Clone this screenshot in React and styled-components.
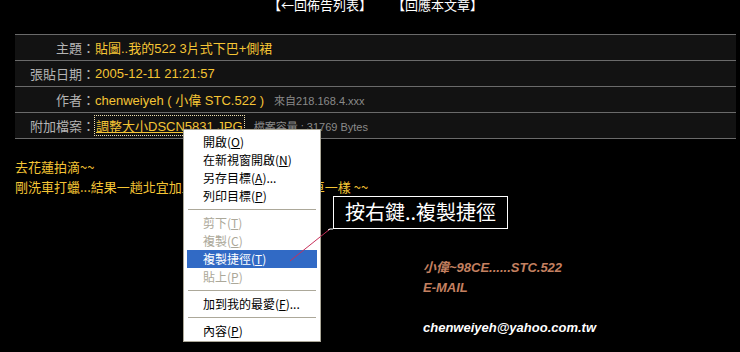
import React from 'react';
import styled, { createGlobalStyle } from 'styled-components';

const GlobalStyle = createGlobalStyle`
  html, body {
    margin: 0;
    padding: 0;
    background: #000;
  }
  body {
    font-family: "Liberation Sans", "Noto Sans CJK TC", sans-serif;
    overflow: hidden;
  }
`;

const rows = [
  { label: '主題', value: '貼圖..我的522 3片式下巴+側裙' },
  { label: '張貼日期', value: '2005-12-11 21:21:57' },
  { label: '作者', value: 'chenweiyeh ( 小偉 STC.522 )', extra: '來自218.168.4.xxx' },
  { label: '附加檔案', file: '調整大小DSCN5831.JPG', extra: '檔案容量 : 31769 Bytes' },
];

const menuItems = [
  { text: '開啟', key: 'O' },
  { text: '在新視窗開啟', key: 'N' },
  { text: '另存目標', key: 'A', more: true },
  { text: '列印目標', key: 'P' },
  { sep: true },
  { text: '剪下', key: 'T', disabled: true },
  { text: '複製', key: 'C', disabled: true },
  { text: '複製捷徑', key: 'T', active: true },
  { text: '貼上', key: 'P', disabled: true },
  { sep: true },
  { text: '加到我的最愛', key: 'F', more: true },
  { sep: true },
  { text: '內容', key: 'P' },
];

const App = () => {
  return (
    <Page>
      <GlobalStyle />
      <Nav>
        <NavLink>【←回佈告列表】</NavLink>
        <NavLink>【回應本文章】</NavLink>
      </Nav>

      <InfoTable>
        {rows.map(row => (
          <Row key={row.label}>
            <Label>{row.label}：</Label>
            <Value>
              {row.value}
              {row.file && <FileLink>{row.file}</FileLink>}
              {row.extra && <Extra>{row.extra}</Extra>}
            </Value>
          </Row>
        ))}
      </InfoTable>

      <Body>
        <p>去花蓮拍滴~~</p>
        <p>剛洗車打蠟...結果一趟北宜加上下大雨整台就跟沒洗車一樣 ~~</p>
      </Body>

      <Signature>
        <SigLine>小偉~98CE......STC.522</SigLine>
        <SigLine>E-MAIL</SigLine>
        <SigLine />
        <SigLine $white>chenweiyeh@yahoo.com.tw</SigLine>
      </Signature>

      <Menu>
        {menuItems.map((item, i) =>
          item.sep ? (
            <Separator key={i} />
          ) : (
            <MenuItem key={i} $disabled={item.disabled} $active={item.active}>
              {item.text}(<u>{item.key}</u>){item.more ? '...' : ''}
            </MenuItem>
          )
        )}
      </Menu>

      <Pointer width="50" height="40" viewBox="0 0 50 40">
        <line x1="44" y1="3" x2="4" y2="35" stroke="#c8305a" strokeWidth="1" />
        <polyline points="42,4 44,3 47,3" fill="none" stroke="#ffffff" strokeWidth="1" />
      </Pointer>
      <Callout>按右鍵..複製捷徑</Callout>
    </Page>
  );
};

const Page = styled.div`
  position: relative;
  width: 740px;
  height: 352px;
  padding: 0 4px 0 15px;
  box-sizing: border-box;
  background: #000;
`;

const Nav = styled.div`
  display: flex;
  justify-content: center;
  gap: 20px;
  margin-top: -3px;
  padding-left: 0;
  height: 16px;
`;

const NavLink = styled.span`
  color: #fff;
  font-size: 13px;
  line-height: 16px;
  font-family: "Noto Sans CJK TC", sans-serif;
`;

const InfoTable = styled.div`
  margin-top: 21px;
  border-top: 1px solid #6a6a6a;
  background: #121212;
`;

const Row = styled.div`
  display: grid;
  grid-template-columns: 80px 1fr;
  height: 25px;
  align-items: center;
  border-bottom: 1px solid #6a6a6a;
`;

const Label = styled.div`
  color: #b4b4b4;
  font-size: 13px;
  text-align: right;
  font-family: "Noto Sans CJK TC", sans-serif;
`;

const Value = styled.div`
  color: #f5c535;
  font-size: 13px;
  white-space: nowrap;
  display: flex;
  align-items: center;
`;

const FileLink = styled.span`
  color: #f5c535;
  text-decoration: underline;
  outline: 1px dotted #f0e0b0;
  padding: 0 1px;
`;

const Extra = styled.span`
  color: #8a8a8a;
  font-size: 11px;
  margin-left: 10px;
`;

const Body = styled.div`
  margin-top: 18px;
  color: #f5c535;
  font-size: 13px;
  line-height: 20px;
  font-family: "Noto Sans CJK TC", sans-serif;

  p {
    margin: 0;
    white-space: nowrap;
  }
`;

const Signature = styled.div`
  margin-top: 61px;
  padding-left: 408px;
`;

const SigLine = styled.div`
  height: 20px;
  line-height: 20px;
  font-size: 13px;
  font-weight: 700;
  font-style: italic;
  color: ${p => (p.$white ? '#ffffff' : '#c48060')};
`;

const Menu = styled.div`
  position: absolute;
  left: 183px;
  top: 132px;
  width: 138px;
  height: 213px;
  box-sizing: border-box;
  padding: 3px 3px;
  background: #fff;
  border: 1px solid #aca899;
  font-family: "Noto Sans CJK TC", sans-serif;
  font-size: 12px;
`;

const MenuItem = styled.div`
  height: 18px;
  line-height: 18px;
  padding-left: 16px;
  white-space: nowrap;
  color: ${p => (p.$active ? '#fff' : p.$disabled ? '#aca899' : '#000')};
  background: ${p => (p.$active ? '#316ac5' : 'transparent')};

  u {
    text-decoration: underline;
  }
`;

const Separator = styled.div`
  height: 9px;
  display: flex;
  align-items: center;

  &::after {
    content: '';
    flex: 1;
    margin: 0 1px;
    border-top: 1px solid #aca899;
  }
`;

const Callout = styled.div`
  position: absolute;
  left: 333px;
  top: 199px;
  width: 175px;
  height: 33px;
  box-sizing: border-box;
  border: 1px solid #fff;
  background: #000;
  color: #fff;
  font-size: 20px;
  line-height: 30px;
  text-align: center;
  font-family: "Noto Sans CJK TC", sans-serif;
`;

const Pointer = styled.svg`
  position: absolute;
  left: 286px;
  top: 229px;
`;

export default App;
